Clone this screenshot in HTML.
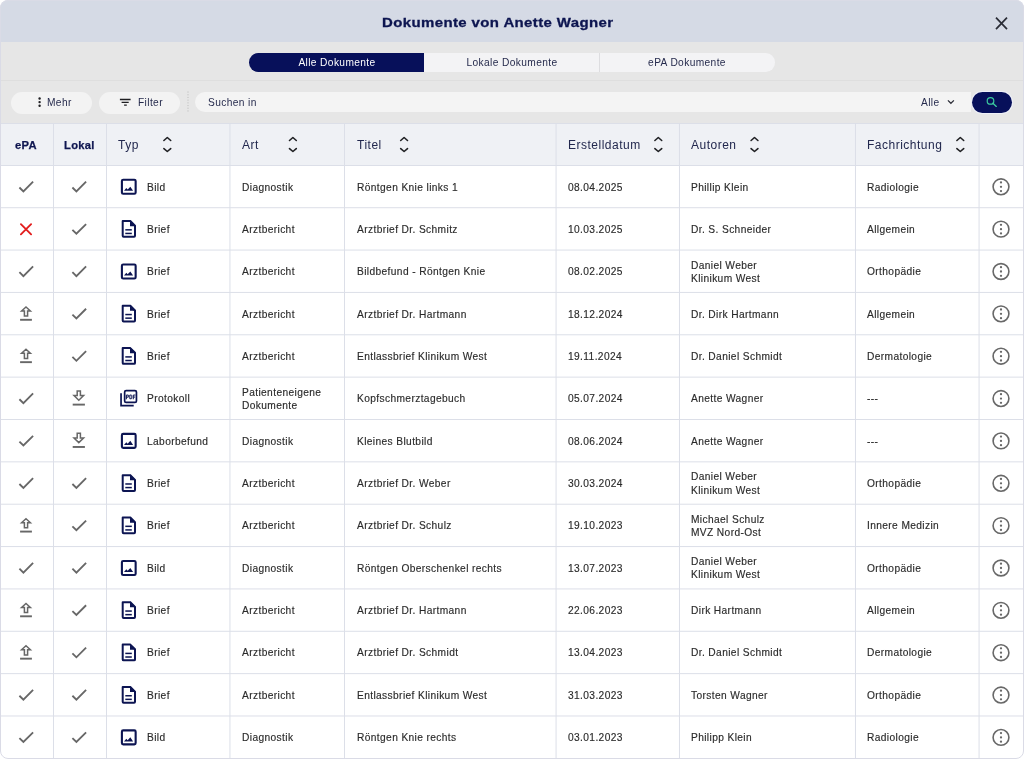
<!DOCTYPE html>
<html><head><meta charset="utf-8"><title>Dokumente von Anette Wagner</title>
<style>
*{margin:0;padding:0;box-sizing:border-box}
html,body{width:1024px;height:759px;overflow:hidden;background:#ffffff}
body{font-family:"Liberation Sans",sans-serif;position:relative}
.a{position:absolute}
.t{position:absolute;white-space:nowrap;color:#2b2b2b;font-size:10.2px;letter-spacing:0.38px;line-height:13.2px;-webkit-text-stroke:0.15px #2b2b2b}
.tb{position:absolute;white-space:nowrap;color:#262b4d;font-size:10.2px;letter-spacing:0.38px;line-height:13px}
.th{position:absolute;white-space:nowrap;color:#22284e;font-size:12px;letter-spacing:0.5px;line-height:15px}
.vl{position:absolute;top:123px;width:1px;height:636px;background:#dcdfe8}
.hl{position:absolute;left:0;width:1024px;height:1px;background:#dcdfe8}
.t,.th,.tb,.g{will-change:transform}
svg.ov{position:absolute;left:0;top:0;width:1024px;height:759px;overflow:visible}
</style></head><body>

<div class="a" style="left:0;top:0;width:1024px;height:42px;background:#d5dae5"></div>
<div class="a g" style="left:381.5px;top:15px;font-weight:bold;font-size:13.4px;letter-spacing:0.35px;color:#0d1550;line-height:16px;white-space:nowrap;-webkit-text-stroke:0.3px #0d1550;transform-origin:0 0;transform:scaleX(1.118)">Dokumente von Anette Wagner</div>
<div class="a" style="left:0;top:42px;width:1024px;height:81px;background:#e6e6e6"></div>
<div class="a" style="left:0;top:80px;width:1024px;height:1px;background:#dedede"></div>
<div class="a" style="left:249px;top:53px;width:526px;height:18.5px;border-radius:9.25px;background:#f3f3f5;overflow:hidden"><div class="a" style="left:0;top:0;width:175px;height:19px;background:#07105a"></div><div class="a" style="left:350px;top:0;width:1px;height:19px;background:#dddde0"></div></div>
<div class="a g" style="left:256.5px;top:56px;width:160px;text-align:center;font-size:10.2px;letter-spacing:0.38px;line-height:13px;color:#ffffff;white-space:nowrap">Alle Dokumente</div>
<div class="a g" style="left:431.5px;top:56px;width:160px;text-align:center;font-size:10.2px;letter-spacing:0.38px;line-height:13px;color:#262b4d;white-space:nowrap">Lokale Dokumente</div>
<div class="a g" style="left:607px;top:56px;width:160px;text-align:center;font-size:10.2px;letter-spacing:0.38px;line-height:13px;color:#262b4d;white-space:nowrap">ePA Dokumente</div>
<div class="a" style="left:11px;top:91.5px;width:81px;height:22px;border-radius:11px;background:#f3f3f3"></div>
<div class="a" style="left:99px;top:91.5px;width:81px;height:22px;border-radius:11px;background:#f3f3f3"></div>
<div class="tb" style="left:47px;top:96px">Mehr</div>
<div class="tb" style="left:137.5px;top:96px">Filter</div>
<div class="a" style="left:194.5px;top:92px;width:776px;height:20px;border-radius:10px 0 0 10px;background:#f4f4f4"></div>
<div class="tb" style="left:208px;top:96px">Suchen in</div>
<div class="tb" style="left:921px;top:96px">Alle</div>
<div class="a" style="left:971px;top:91px;width:42px;height:22.5px;border-radius:11.25px;background:#eef0f8"></div>
<div class="a" style="left:972px;top:91.8px;width:40.2px;height:20.8px;border-radius:10.4px;background:#07105a"></div>
<div class="a" style="left:0;top:123px;width:1024px;height:42px;background:#eff1f5"></div>
<div class="hl" style="top:123px"></div>
<div class="hl" style="top:165px"></div>
<div class="th" style="left:15px;top:137.5px;font-weight:bold;color:#0f1650;font-size:11.2px;letter-spacing:0.3px;-webkit-text-stroke:0.25px #0f1650">ePA</div>
<div class="th" style="left:64px;top:137.5px;font-weight:bold;color:#0f1650;font-size:11.2px;letter-spacing:0.3px;-webkit-text-stroke:0.25px #0f1650">Lokal</div>
<div class="th" style="left:118px;top:137.5px">Typ</div>
<div class="th" style="left:241.6px;top:137.5px">Art</div>
<div class="th" style="left:356.5px;top:137.5px">Titel</div>
<div class="th" style="left:567.8px;top:137.5px">Erstelldatum</div>
<div class="th" style="left:690.7px;top:137.5px">Autoren</div>
<div class="th" style="left:867.4px;top:137.5px">Fachrichtung</div>
<div class="t" style="left:146.5px;top:181px">Bild</div>
<div class="t" style="left:241.6px;top:181px">Diagnostik</div>
<div class="t" style="left:356.5px;top:181px">Röntgen Knie links 1</div>
<div class="t" style="left:567.8px;top:181px">08.04.2025</div>
<div class="t" style="left:690.7px;top:181px">Phillip Klein</div>
<div class="t" style="left:867.4px;top:181px">Radiologie</div>
<div class="t" style="left:146.5px;top:223px">Brief</div>
<div class="t" style="left:241.6px;top:223px">Arztbericht</div>
<div class="t" style="left:356.5px;top:223px">Arztbrief Dr. Schmitz</div>
<div class="t" style="left:567.8px;top:223px">10.03.2025</div>
<div class="t" style="left:690.7px;top:223px">Dr. S. Schneider</div>
<div class="t" style="left:867.4px;top:223px">Allgemein</div>
<div class="t" style="left:146.5px;top:265px">Brief</div>
<div class="t" style="left:241.6px;top:265px">Arztbericht</div>
<div class="t" style="left:356.5px;top:265px">Bildbefund - Röntgen Knie</div>
<div class="t" style="left:567.8px;top:265px">08.02.2025</div>
<div class="t" style="left:690.7px;top:259px">Daniel Weber</div><div class="t" style="left:690.7px;top:272px">Klinikum West</div>
<div class="t" style="left:867.4px;top:265px">Orthopädie</div>
<div class="t" style="left:146.5px;top:308px">Brief</div>
<div class="t" style="left:241.6px;top:308px">Arztbericht</div>
<div class="t" style="left:356.5px;top:308px">Arztbrief Dr. Hartmann</div>
<div class="t" style="left:567.8px;top:308px">18.12.2024</div>
<div class="t" style="left:690.7px;top:308px">Dr. Dirk Hartmann</div>
<div class="t" style="left:867.4px;top:308px">Allgemein</div>
<div class="t" style="left:146.5px;top:350px">Brief</div>
<div class="t" style="left:241.6px;top:350px">Arztbericht</div>
<div class="t" style="left:356.5px;top:350px">Entlassbrief Klinikum West</div>
<div class="t" style="left:567.8px;top:350px">19.11.2024</div>
<div class="t" style="left:690.7px;top:350px">Dr. Daniel Schmidt</div>
<div class="t" style="left:867.4px;top:350px">Dermatologie</div>
<div class="t" style="left:146.5px;top:392px">Protokoll</div>
<div class="t" style="left:241.6px;top:386px">Patienteneigene</div><div class="t" style="left:241.6px;top:399px">Dokumente</div>
<div class="t" style="left:356.5px;top:392px">Kopfschmerztagebuch</div>
<div class="t" style="left:567.8px;top:392px">05.07.2024</div>
<div class="t" style="left:690.7px;top:392px">Anette Wagner</div>
<div class="t" style="left:867.4px;top:392px">---</div>
<div class="t" style="left:146.5px;top:435px">Laborbefund</div>
<div class="t" style="left:241.6px;top:435px">Diagnostik</div>
<div class="t" style="left:356.5px;top:435px">Kleines Blutbild</div>
<div class="t" style="left:567.8px;top:435px">08.06.2024</div>
<div class="t" style="left:690.7px;top:435px">Anette Wagner</div>
<div class="t" style="left:867.4px;top:435px">---</div>
<div class="t" style="left:146.5px;top:477px">Brief</div>
<div class="t" style="left:241.6px;top:477px">Arztbericht</div>
<div class="t" style="left:356.5px;top:477px">Arztbrief Dr. Weber</div>
<div class="t" style="left:567.8px;top:477px">30.03.2024</div>
<div class="t" style="left:690.7px;top:470px">Daniel Weber</div><div class="t" style="left:690.7px;top:484px">Klinikum West</div>
<div class="t" style="left:867.4px;top:477px">Orthopädie</div>
<div class="t" style="left:146.5px;top:519px">Brief</div>
<div class="t" style="left:241.6px;top:519px">Arztbericht</div>
<div class="t" style="left:356.5px;top:519px">Arztbrief Dr. Schulz</div>
<div class="t" style="left:567.8px;top:519px">19.10.2023</div>
<div class="t" style="left:690.7px;top:513px">Michael Schulz</div><div class="t" style="left:690.7px;top:526px">MVZ Nord-Ost</div>
<div class="t" style="left:867.4px;top:519px">Innere Medizin</div>
<div class="t" style="left:146.5px;top:562px">Bild</div>
<div class="t" style="left:241.6px;top:562px">Diagnostik</div>
<div class="t" style="left:356.5px;top:562px">Röntgen Oberschenkel rechts</div>
<div class="t" style="left:567.8px;top:562px">13.07.2023</div>
<div class="t" style="left:690.7px;top:555px">Daniel Weber</div><div class="t" style="left:690.7px;top:568px">Klinikum West</div>
<div class="t" style="left:867.4px;top:562px">Orthopädie</div>
<div class="t" style="left:146.5px;top:604px">Brief</div>
<div class="t" style="left:241.6px;top:604px">Arztbericht</div>
<div class="t" style="left:356.5px;top:604px">Arztbrief Dr. Hartmann</div>
<div class="t" style="left:567.8px;top:604px">22.06.2023</div>
<div class="t" style="left:690.7px;top:604px">Dirk Hartmann</div>
<div class="t" style="left:867.4px;top:604px">Allgemein</div>
<div class="t" style="left:146.5px;top:646px">Brief</div>
<div class="t" style="left:241.6px;top:646px">Arztbericht</div>
<div class="t" style="left:356.5px;top:646px">Arztbrief Dr. Schmidt</div>
<div class="t" style="left:567.8px;top:646px">13.04.2023</div>
<div class="t" style="left:690.7px;top:646px">Dr. Daniel Schmidt</div>
<div class="t" style="left:867.4px;top:646px">Dermatologie</div>
<div class="t" style="left:146.5px;top:689px">Brief</div>
<div class="t" style="left:241.6px;top:689px">Arztbericht</div>
<div class="t" style="left:356.5px;top:689px">Entlassbrief Klinikum West</div>
<div class="t" style="left:567.8px;top:689px">31.03.2023</div>
<div class="t" style="left:690.7px;top:689px">Torsten Wagner</div>
<div class="t" style="left:867.4px;top:689px">Orthopädie</div>
<div class="t" style="left:146.5px;top:731px">Bild</div>
<div class="t" style="left:241.6px;top:731px">Diagnostik</div>
<div class="t" style="left:356.5px;top:731px">Röntgen Knie rechts</div>
<div class="t" style="left:567.8px;top:731px">03.01.2023</div>
<div class="t" style="left:690.7px;top:731px">Philipp Klein</div>
<div class="t" style="left:867.4px;top:731px">Radiologie</div>
<svg class="ov" viewBox="0 0 1024 759"><circle cx="39.6" cy="98.5" r="1.2" fill="#1e1e22"/><circle cx="39.6" cy="102.1" r="1.2" fill="#1e1e22"/><circle cx="39.6" cy="105.7" r="1.2" fill="#1e1e22"/><path d="M119.9 99.5 H130.6 M121.6 102.35 H128.7 M124.1 105.2 H126.8" stroke="#1e1e22" stroke-width="1.3" fill="none"/><rect x="187.5" y="91.5" width="1" height="1.1" fill="#bdbdbd"/><rect x="187.5" y="94.2" width="1" height="1.1" fill="#bdbdbd"/><rect x="187.5" y="96.9" width="1" height="1.1" fill="#bdbdbd"/><rect x="187.5" y="99.6" width="1" height="1.1" fill="#bdbdbd"/><rect x="187.5" y="102.3" width="1" height="1.1" fill="#bdbdbd"/><rect x="187.5" y="105" width="1" height="1.1" fill="#bdbdbd"/><rect x="187.5" y="107.7" width="1" height="1.1" fill="#bdbdbd"/><rect x="187.5" y="110.4" width="1" height="1.1" fill="#bdbdbd"/><path d="M947.9 100.4 L950.9 103.3 L953.9 100.4" stroke="#2a2c36" stroke-width="1.2" fill="none"/><circle cx="990.5" cy="100.9" r="3.3" fill="none" stroke="#3ccb9f" stroke-width="1.2"/><path d="M992.9 103.3 L996.3 106.4" stroke="#3ccb9f" stroke-width="1.35" stroke-linecap="round"/><path d="M996 17.6 L1007 29.2 M1007 17.6 L996 29.2" stroke="#2a2c36" stroke-width="1.7" fill="none"/><path d="M163.9 140.5 L167.3 137.5 L170.7 140.5 M163.9 148.6 L167.3 151.5 L170.7 148.6" fill="none" stroke="#202124" stroke-width="1.6" stroke-linecap="round" stroke-linejoin="round"/><path d="M289.5 140.5 L292.9 137.5 L296.3 140.5 M289.5 148.6 L292.9 151.5 L296.3 148.6" fill="none" stroke="#202124" stroke-width="1.6" stroke-linecap="round" stroke-linejoin="round"/><path d="M400.7 140.5 L404.1 137.5 L407.5 140.5 M400.7 148.6 L404.1 151.5 L407.5 148.6" fill="none" stroke="#202124" stroke-width="1.6" stroke-linecap="round" stroke-linejoin="round"/><path d="M654.9 140.5 L658.3 137.5 L661.7 140.5 M654.9 148.6 L658.3 151.5 L661.7 148.6" fill="none" stroke="#202124" stroke-width="1.6" stroke-linecap="round" stroke-linejoin="round"/><path d="M751.1 140.5 L754.5 137.5 L757.9 140.5 M751.1 148.6 L754.5 151.5 L757.9 148.6" fill="none" stroke="#202124" stroke-width="1.6" stroke-linecap="round" stroke-linejoin="round"/><path d="M956.9 140.5 L960.3 137.5 L963.7 140.5 M956.9 148.6 L960.3 151.5 L963.7 148.6" fill="none" stroke="#202124" stroke-width="1.6" stroke-linecap="round" stroke-linejoin="round"/><rect x="0" y="207.21" width="1024" height="1" fill="#dcdfe8"/><path d="M19.4 187.48 L23.4 191.38 L33.1 181.68" fill="none" stroke="#676767" stroke-width="1.85"/><path d="M72.4 187.48 L76.4 191.38 L86.1 181.68" fill="none" stroke="#676767" stroke-width="1.85"/><rect x="121.9" y="179.73" width="13.75" height="14" rx="1.3" fill="none" stroke="#0c1452" stroke-width="2.1"/><path d="M124 190.78 L126.3 188.08 L127.7 189.58 L130.3 186.68 L133.1 190.78 Z" fill="#0c1452"/><circle cx="1001" cy="186.78" r="7.9" fill="none" stroke="#686868" stroke-width="1.6"/><circle cx="1001" cy="182.43" r="1.15" fill="#686868"/><circle cx="1001" cy="186.78" r="1.15" fill="#686868"/><circle cx="1001" cy="191.08" r="1.15" fill="#686868"/><rect x="0" y="249.56" width="1024" height="1" fill="#dcdfe8"/><path d="M20.9 224.14 L31.1 234.34 M31.1 224.14 L20.9 234.34" fill="none" stroke="#e21d1d" stroke-width="1.85" stroke-linecap="round"/><path d="M72.4 229.84 L76.4 233.74 L86.1 224.04" fill="none" stroke="#676767" stroke-width="1.85"/><path d="M122.7 221.04 L130.3 221.04 L135 225.74 L135 235.84 Q135 236.74 134.1 236.74 L123.6 236.74 Q122.7 236.74 122.7 235.84 Z" fill="none" stroke="#0c1452" stroke-width="2" stroke-linejoin="round"/><path d="M130 220.14 L135.9 226.14 L130 226.14 Z" fill="#0c1452"/><rect x="125.3" y="229.09" width="6.5" height="1.5" fill="#0c1452"/><rect x="125.3" y="232.69" width="6.5" height="1.5" fill="#0c1452"/><circle cx="1001" cy="229.14" r="7.9" fill="none" stroke="#686868" stroke-width="1.6"/><circle cx="1001" cy="224.79" r="1.15" fill="#686868"/><circle cx="1001" cy="229.14" r="1.15" fill="#686868"/><circle cx="1001" cy="233.44" r="1.15" fill="#686868"/><rect x="0" y="291.92" width="1024" height="1" fill="#dcdfe8"/><path d="M19.4 272.19 L23.4 276.09 L33.1 266.39" fill="none" stroke="#676767" stroke-width="1.85"/><path d="M72.4 272.19 L76.4 276.09 L86.1 266.39" fill="none" stroke="#676767" stroke-width="1.85"/><rect x="121.9" y="264.44" width="13.75" height="14" rx="1.3" fill="none" stroke="#0c1452" stroke-width="2.1"/><path d="M124 275.49 L126.3 272.79 L127.7 274.29 L130.3 271.39 L133.1 275.49 Z" fill="#0c1452"/><circle cx="1001" cy="271.49" r="7.9" fill="none" stroke="#686868" stroke-width="1.6"/><circle cx="1001" cy="267.14" r="1.15" fill="#686868"/><circle cx="1001" cy="271.49" r="1.15" fill="#686868"/><circle cx="1001" cy="275.79" r="1.15" fill="#686868"/><rect x="0" y="334.28" width="1024" height="1" fill="#dcdfe8"/><path d="M26 306.95 L30.4 310.95 L27.6 310.95 L27.6 316.05 L24.4 316.05 L24.4 310.95 L21.6 310.95 Z" fill="none" stroke="#676767" stroke-width="1.5"/><rect x="20.1" y="318.85" width="11.8" height="1.9" fill="#676767"/><path d="M72.4 314.55 L76.4 318.45 L86.1 308.75" fill="none" stroke="#676767" stroke-width="1.85"/><path d="M122.7 305.75 L130.3 305.75 L135 310.45 L135 320.55 Q135 321.45 134.1 321.45 L123.6 321.45 Q122.7 321.45 122.7 320.55 Z" fill="none" stroke="#0c1452" stroke-width="2" stroke-linejoin="round"/><path d="M130 304.85 L135.9 310.85 L130 310.85 Z" fill="#0c1452"/><rect x="125.3" y="313.8" width="6.5" height="1.5" fill="#0c1452"/><rect x="125.3" y="317.4" width="6.5" height="1.5" fill="#0c1452"/><circle cx="1001" cy="313.85" r="7.9" fill="none" stroke="#686868" stroke-width="1.6"/><circle cx="1001" cy="309.5" r="1.15" fill="#686868"/><circle cx="1001" cy="313.85" r="1.15" fill="#686868"/><circle cx="1001" cy="318.15" r="1.15" fill="#686868"/><rect x="0" y="376.63" width="1024" height="1" fill="#dcdfe8"/><path d="M26 349.31 L30.4 353.31 L27.6 353.31 L27.6 358.41 L24.4 358.41 L24.4 353.31 L21.6 353.31 Z" fill="none" stroke="#676767" stroke-width="1.5"/><rect x="20.1" y="361.21" width="11.8" height="1.9" fill="#676767"/><path d="M72.4 356.91 L76.4 360.81 L86.1 351.11" fill="none" stroke="#676767" stroke-width="1.85"/><path d="M122.7 348.11 L130.3 348.11 L135 352.81 L135 362.91 Q135 363.81 134.1 363.81 L123.6 363.81 Q122.7 363.81 122.7 362.91 Z" fill="none" stroke="#0c1452" stroke-width="2" stroke-linejoin="round"/><path d="M130 347.21 L135.9 353.21 L130 353.21 Z" fill="#0c1452"/><rect x="125.3" y="356.16" width="6.5" height="1.5" fill="#0c1452"/><rect x="125.3" y="359.76" width="6.5" height="1.5" fill="#0c1452"/><circle cx="1001" cy="356.21" r="7.9" fill="none" stroke="#686868" stroke-width="1.6"/><circle cx="1001" cy="351.86" r="1.15" fill="#686868"/><circle cx="1001" cy="356.21" r="1.15" fill="#686868"/><circle cx="1001" cy="360.51" r="1.15" fill="#686868"/><rect x="0" y="418.99" width="1024" height="1" fill="#dcdfe8"/><path d="M19.4 399.26 L23.4 403.16 L33.1 393.46" fill="none" stroke="#676767" stroke-width="1.85"/><path d="M77.2 390.91 L80.4 390.91 L80.4 395.56 L83.6 395.56 L78.8 400.26 L74 395.56 L77.2 395.56 Z" fill="none" stroke="#676767" stroke-width="1.5"/><rect x="72.7" y="403.66" width="12.2" height="1.9" fill="#676767"/><path d="M121.05 393.16 L121.05 405.61 L133.7 405.61" fill="none" stroke="#0c1452" stroke-width="1.7"/><rect x="124.65" y="390.61" width="11.8" height="11.8" rx="1.5" fill="none" stroke="#0c1452" stroke-width="1.7"/><path d="M126.4 399.26 V395.06 H128.3 V397.16 H126.4" fill="none" stroke="#0c1452" stroke-width="1.0"/><path d="M129.8 395.06 H131.1 Q131.8 395.06 131.8 395.76 V398.06 Q131.8 398.76 131.1 398.76 H129.8 Z" fill="none" stroke="#0c1452" stroke-width="1.0"/><path d="M133.3 399.26 V395.06 H135.4 M133.3 397.06 H135.1" fill="none" stroke="#0c1452" stroke-width="1.0"/><circle cx="1001" cy="398.56" r="7.9" fill="none" stroke="#686868" stroke-width="1.6"/><circle cx="1001" cy="394.21" r="1.15" fill="#686868"/><circle cx="1001" cy="398.56" r="1.15" fill="#686868"/><circle cx="1001" cy="402.86" r="1.15" fill="#686868"/><rect x="0" y="461.35" width="1024" height="1" fill="#dcdfe8"/><path d="M19.4 441.62 L23.4 445.52 L33.1 435.82" fill="none" stroke="#676767" stroke-width="1.85"/><path d="M77.2 433.27 L80.4 433.27 L80.4 437.92 L83.6 437.92 L78.8 442.62 L74 437.92 L77.2 437.92 Z" fill="none" stroke="#676767" stroke-width="1.5"/><rect x="72.7" y="446.02" width="12.2" height="1.9" fill="#676767"/><rect x="121.9" y="433.87" width="13.75" height="14" rx="1.3" fill="none" stroke="#0c1452" stroke-width="2.1"/><path d="M124 444.92 L126.3 442.22 L127.7 443.72 L130.3 440.82 L133.1 444.92 Z" fill="#0c1452"/><circle cx="1001" cy="440.92" r="7.9" fill="none" stroke="#686868" stroke-width="1.6"/><circle cx="1001" cy="436.57" r="1.15" fill="#686868"/><circle cx="1001" cy="440.92" r="1.15" fill="#686868"/><circle cx="1001" cy="445.22" r="1.15" fill="#686868"/><rect x="0" y="503.71" width="1024" height="1" fill="#dcdfe8"/><path d="M19.4 483.98 L23.4 487.88 L33.1 478.18" fill="none" stroke="#676767" stroke-width="1.85"/><path d="M72.4 483.98 L76.4 487.88 L86.1 478.18" fill="none" stroke="#676767" stroke-width="1.85"/><path d="M122.7 475.18 L130.3 475.18 L135 479.88 L135 489.98 Q135 490.88 134.1 490.88 L123.6 490.88 Q122.7 490.88 122.7 489.98 Z" fill="none" stroke="#0c1452" stroke-width="2" stroke-linejoin="round"/><path d="M130 474.28 L135.9 480.28 L130 480.28 Z" fill="#0c1452"/><rect x="125.3" y="483.23" width="6.5" height="1.5" fill="#0c1452"/><rect x="125.3" y="486.83" width="6.5" height="1.5" fill="#0c1452"/><circle cx="1001" cy="483.28" r="7.9" fill="none" stroke="#686868" stroke-width="1.6"/><circle cx="1001" cy="478.93" r="1.15" fill="#686868"/><circle cx="1001" cy="483.28" r="1.15" fill="#686868"/><circle cx="1001" cy="487.58" r="1.15" fill="#686868"/><rect x="0" y="546.06" width="1024" height="1" fill="#dcdfe8"/><path d="M26 518.73 L30.4 522.73 L27.6 522.73 L27.6 527.83 L24.4 527.83 L24.4 522.73 L21.6 522.73 Z" fill="none" stroke="#676767" stroke-width="1.5"/><rect x="20.1" y="530.63" width="11.8" height="1.9" fill="#676767"/><path d="M72.4 526.33 L76.4 530.23 L86.1 520.53" fill="none" stroke="#676767" stroke-width="1.85"/><path d="M122.7 517.53 L130.3 517.53 L135 522.23 L135 532.33 Q135 533.23 134.1 533.23 L123.6 533.23 Q122.7 533.23 122.7 532.33 Z" fill="none" stroke="#0c1452" stroke-width="2" stroke-linejoin="round"/><path d="M130 516.63 L135.9 522.63 L130 522.63 Z" fill="#0c1452"/><rect x="125.3" y="525.58" width="6.5" height="1.5" fill="#0c1452"/><rect x="125.3" y="529.18" width="6.5" height="1.5" fill="#0c1452"/><circle cx="1001" cy="525.63" r="7.9" fill="none" stroke="#686868" stroke-width="1.6"/><circle cx="1001" cy="521.28" r="1.15" fill="#686868"/><circle cx="1001" cy="525.63" r="1.15" fill="#686868"/><circle cx="1001" cy="529.93" r="1.15" fill="#686868"/><rect x="0" y="588.42" width="1024" height="1" fill="#dcdfe8"/><path d="M19.4 568.69 L23.4 572.59 L33.1 562.89" fill="none" stroke="#676767" stroke-width="1.85"/><path d="M72.4 568.69 L76.4 572.59 L86.1 562.89" fill="none" stroke="#676767" stroke-width="1.85"/><rect x="121.9" y="560.94" width="13.75" height="14" rx="1.3" fill="none" stroke="#0c1452" stroke-width="2.1"/><path d="M124 571.99 L126.3 569.29 L127.7 570.79 L130.3 567.89 L133.1 571.99 Z" fill="#0c1452"/><circle cx="1001" cy="567.99" r="7.9" fill="none" stroke="#686868" stroke-width="1.6"/><circle cx="1001" cy="563.64" r="1.15" fill="#686868"/><circle cx="1001" cy="567.99" r="1.15" fill="#686868"/><circle cx="1001" cy="572.29" r="1.15" fill="#686868"/><rect x="0" y="630.78" width="1024" height="1" fill="#dcdfe8"/><path d="M26 603.45 L30.4 607.45 L27.6 607.45 L27.6 612.55 L24.4 612.55 L24.4 607.45 L21.6 607.45 Z" fill="none" stroke="#676767" stroke-width="1.5"/><rect x="20.1" y="615.35" width="11.8" height="1.9" fill="#676767"/><path d="M72.4 611.05 L76.4 614.95 L86.1 605.25" fill="none" stroke="#676767" stroke-width="1.85"/><path d="M122.7 602.25 L130.3 602.25 L135 606.95 L135 617.05 Q135 617.95 134.1 617.95 L123.6 617.95 Q122.7 617.95 122.7 617.05 Z" fill="none" stroke="#0c1452" stroke-width="2" stroke-linejoin="round"/><path d="M130 601.35 L135.9 607.35 L130 607.35 Z" fill="#0c1452"/><rect x="125.3" y="610.3" width="6.5" height="1.5" fill="#0c1452"/><rect x="125.3" y="613.9" width="6.5" height="1.5" fill="#0c1452"/><circle cx="1001" cy="610.35" r="7.9" fill="none" stroke="#686868" stroke-width="1.6"/><circle cx="1001" cy="606" r="1.15" fill="#686868"/><circle cx="1001" cy="610.35" r="1.15" fill="#686868"/><circle cx="1001" cy="614.65" r="1.15" fill="#686868"/><rect x="0" y="673.13" width="1024" height="1" fill="#dcdfe8"/><path d="M26 645.81 L30.4 649.81 L27.6 649.81 L27.6 654.91 L24.4 654.91 L24.4 649.81 L21.6 649.81 Z" fill="none" stroke="#676767" stroke-width="1.5"/><rect x="20.1" y="657.71" width="11.8" height="1.9" fill="#676767"/><path d="M72.4 653.41 L76.4 657.31 L86.1 647.61" fill="none" stroke="#676767" stroke-width="1.85"/><path d="M122.7 644.61 L130.3 644.61 L135 649.31 L135 659.41 Q135 660.31 134.1 660.31 L123.6 660.31 Q122.7 660.31 122.7 659.41 Z" fill="none" stroke="#0c1452" stroke-width="2" stroke-linejoin="round"/><path d="M130 643.71 L135.9 649.71 L130 649.71 Z" fill="#0c1452"/><rect x="125.3" y="652.66" width="6.5" height="1.5" fill="#0c1452"/><rect x="125.3" y="656.26" width="6.5" height="1.5" fill="#0c1452"/><circle cx="1001" cy="652.71" r="7.9" fill="none" stroke="#686868" stroke-width="1.6"/><circle cx="1001" cy="648.36" r="1.15" fill="#686868"/><circle cx="1001" cy="652.71" r="1.15" fill="#686868"/><circle cx="1001" cy="657.01" r="1.15" fill="#686868"/><rect x="0" y="715.49" width="1024" height="1" fill="#dcdfe8"/><path d="M19.4 695.76 L23.4 699.66 L33.1 689.96" fill="none" stroke="#676767" stroke-width="1.85"/><path d="M72.4 695.76 L76.4 699.66 L86.1 689.96" fill="none" stroke="#676767" stroke-width="1.85"/><path d="M122.7 686.96 L130.3 686.96 L135 691.66 L135 701.76 Q135 702.66 134.1 702.66 L123.6 702.66 Q122.7 702.66 122.7 701.76 Z" fill="none" stroke="#0c1452" stroke-width="2" stroke-linejoin="round"/><path d="M130 686.06 L135.9 692.06 L130 692.06 Z" fill="#0c1452"/><rect x="125.3" y="695.01" width="6.5" height="1.5" fill="#0c1452"/><rect x="125.3" y="698.61" width="6.5" height="1.5" fill="#0c1452"/><circle cx="1001" cy="695.06" r="7.9" fill="none" stroke="#686868" stroke-width="1.6"/><circle cx="1001" cy="690.71" r="1.15" fill="#686868"/><circle cx="1001" cy="695.06" r="1.15" fill="#686868"/><circle cx="1001" cy="699.36" r="1.15" fill="#686868"/><path d="M19.4 738.12 L23.4 742.02 L33.1 732.32" fill="none" stroke="#676767" stroke-width="1.85"/><path d="M72.4 738.12 L76.4 742.02 L86.1 732.32" fill="none" stroke="#676767" stroke-width="1.85"/><rect x="121.9" y="730.37" width="13.75" height="14" rx="1.3" fill="none" stroke="#0c1452" stroke-width="2.1"/><path d="M124 741.42 L126.3 738.72 L127.7 740.22 L130.3 737.32 L133.1 741.42 Z" fill="#0c1452"/><circle cx="1001" cy="737.42" r="7.9" fill="none" stroke="#686868" stroke-width="1.6"/><circle cx="1001" cy="733.07" r="1.15" fill="#686868"/><circle cx="1001" cy="737.42" r="1.15" fill="#686868"/><circle cx="1001" cy="741.72" r="1.15" fill="#686868"/><rect x="53" y="123" width="1" height="636" fill="#dcdfe8"/><rect x="106" y="123" width="1" height="636" fill="#dcdfe8"/><rect x="229.44" y="123" width="1" height="636" fill="#dcdfe8"/><rect x="344" y="123" width="1" height="636" fill="#dcdfe8"/><rect x="555.57" y="123" width="1" height="636" fill="#dcdfe8"/><rect x="678.97" y="123" width="1" height="636" fill="#dcdfe8"/><rect x="854.97" y="123" width="1" height="636" fill="#dcdfe8"/><rect x="978.57" y="123" width="1" height="636" fill="#dcdfe8"/></svg>
<div class="a" style="left:0;top:0;width:1024px;height:759px;border:1px solid #dadbe6;border-radius:8px;box-shadow:0 0 0 8px #fff"></div>
</body></html>
